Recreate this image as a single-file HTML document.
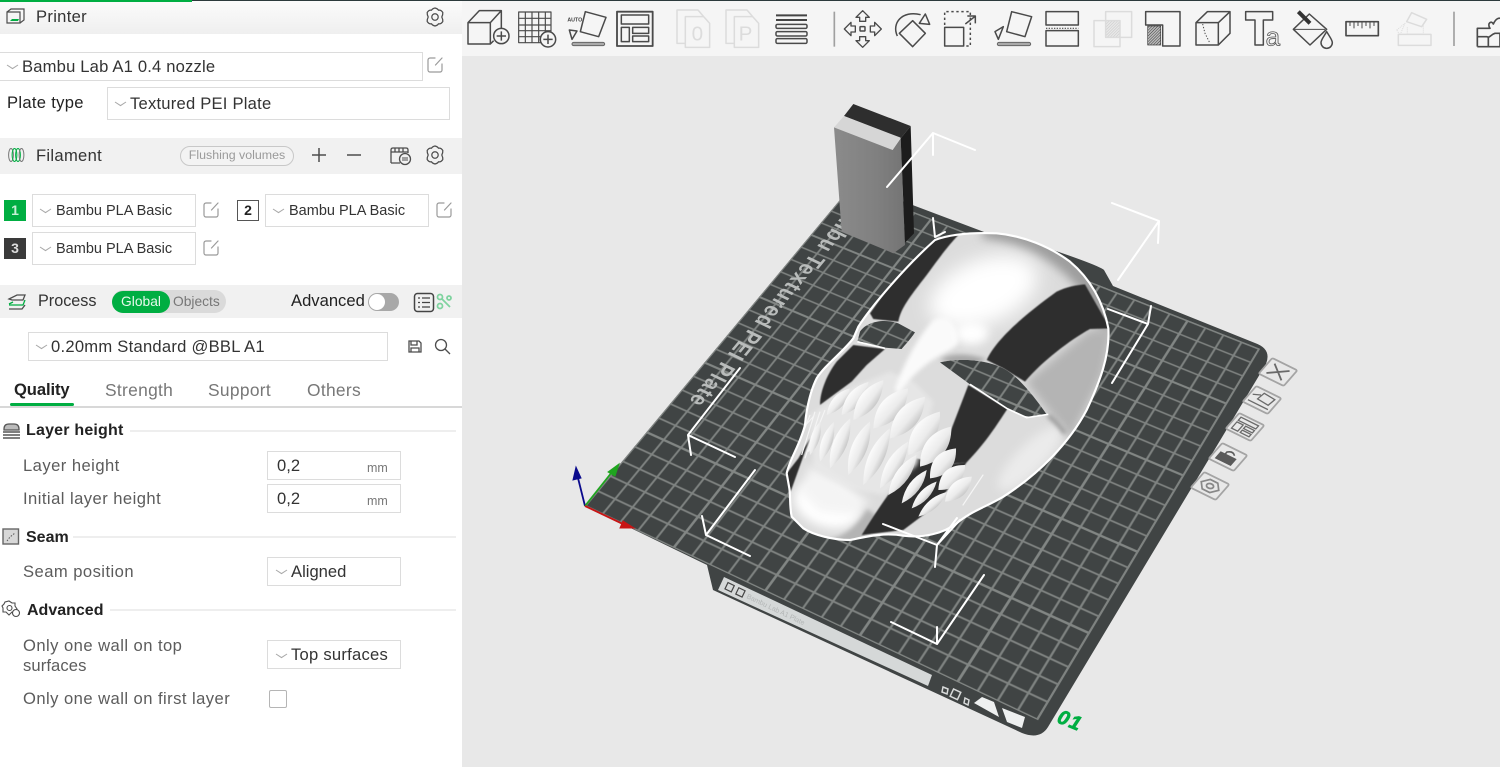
<!DOCTYPE html>
<html><head><meta charset="utf-8"><title>Bambu Studio</title>
<style>
html,body{margin:0;padding:0;width:1500px;height:767px;overflow:hidden;background:#e8e8e8;font-family:"Liberation Sans","Noto Sans CJK SC",sans-serif}
#root{position:relative;width:1500px;height:767px;overflow:hidden}
svg{position:absolute;left:0;top:0;overflow:visible}
.t{position:absolute;white-space:nowrap;line-height:20px;height:20px;font-size:16.6px;color:#333}
.box{position:absolute;box-sizing:border-box;border:1.5px solid #dcdcdc;background:#fff}
.hd{position:absolute;left:0;width:462px}
.g{color:#5c5c5c;letter-spacing:.45px}.b{font-weight:bold;color:#222;font-size:16px;letter-spacing:.2px}
.f{font-size:14.5px;color:#333}
.sw{position:absolute;box-sizing:border-box;width:22px;height:21px;text-align:center;font-size:14px;line-height:20px;font-weight:bold}
.ln{position:absolute;height:1.5px;background:#eeeeee}
.u{font-size:12.5px;color:#777}
.tab{color:#777;font-size:17.4px;letter-spacing:.3px}
</style></head><body><div id="root">

<!-- plate base -->
<svg width="1500" height="767">
<path d="M585 506L854 183L1000 238L1053 250Q1100 266 1104 270L1113 286L1255 343Q1272 349 1266 364L1048 727Q1040 740 1022 733L713 590L707 565Z" fill="#404444"/>
<path d="M724 577L932 675L928 686L718 590Z" fill="#d5d8d8"/>
<g transform="matrix(.9,.43,-.43,.9,724,584)"><rect x="3" y="-3" width="7" height="7" fill="none" stroke="#444" stroke-width="1.2"/><rect x="15" y="-3" width="7" height="7" fill="none" stroke="#444" stroke-width="1.2"/><text x="26" y="3" font-size="7" fill="#b3b6b6" font-family="Liberation Sans">Bambu Lab A1 Plate</text></g>
<polygon points="974,703 982,697 994,702 999,717" fill="#eef0f0"/>
<polygon points="1002,708 1025,717 1022,728 1007,722" fill="#eef0f0"/>
<g fill="none" stroke="#d8dada" stroke-width="1.5"><path d="M943 687l5 2-1 5-5-2z"/><rect x="-3" y="-3" width="8" height="8" transform="translate(955,693) rotate(25)"/><path d="M965 698l4 2-1 5-4-2z"/></g>
</svg>

<!-- grid -->
<div style="position:absolute;left:0;top:0;width:1000px;height:1000px;transform-origin:0 0;transform:matrix3d(.3795,.1616,0,-.00007793,.3972,-.2955,0,.00015013,0,0,1,0,585,506,0,1)">
<svg width="1000" height="1000" viewBox="0 0 1000 1000">
<defs>
<pattern id="gr" x="-20.5" y="-20.5" width="41" height="41" patternUnits="userSpaceOnUse"><path d="M0 20.5H41M20.5 0V41" stroke="#7f8381" stroke-width="4.2" fill="none"/></pattern>
<pattern id="gr5" x="-102.5" y="-102.5" width="205" height="205" patternUnits="userSpaceOnUse"><path d="M0 102.5H205M102.5 0V205" stroke="#828684" stroke-width="5" fill="none"/></pattern>
</defs>
<rect x="0" y="0" width="982" height="984" fill="url(#gr)"/>
<rect x="0" y="0" width="982" height="984" fill="url(#gr5)"/>
<path d="M0 984H982V0" fill="none" stroke="#7f8381" stroke-width="4.2"/>
</svg></div>

<!-- scene -->
<svg width="1500" height="767">
<defs>
<filter id="b30" x="-60%" y="-60%" width="220%" height="220%"><feGaussianBlur stdDeviation="28"/></filter>
<filter id="b14" x="-60%" y="-60%" width="220%" height="220%"><feGaussianBlur stdDeviation="14"/></filter>
<filter id="b6" x="-40%" y="-40%" width="180%" height="180%"><feGaussianBlur stdDeviation="6"/></filter>
<filter id="b1" x="-10%" y="-10%" width="120%" height="120%"><feGaussianBlur stdDeviation="1.6"/></filter>
<clipPath id="sk"><path clip-rule="evenodd" d="M495 45C540 28 600 22 680 25C760 32 840 65 900 110C960 160 1000 230 1015 310C1020 390 990 470 950 555C900 650 810 745 700 815C650 845 600 860 560 895C520 925 460 940 400 932C340 922 290 935 240 945C190 945 130 930 100 910L65 875C58 840 62 815 58 790L50 745C60 700 90 660 105 600C110 540 125 490 140 460C165 420 220 380 250 340L265 305C300 250 400 130 495 45ZM510 412C560 400 640 400 700 430C740 450 790 510 830 568C800 578 770 578 740 565L710 550L600 478ZM270 320C290 290 340 280 385 295L435 322C420 345 400 365 395 372L345 368L262 350Z"/></clipPath>
<linearGradient id="lf" x1="0" y1="0" x2="0" y2="1"><stop offset="0" stop-color="#fbfbfb"/><stop offset=".6" stop-color="#ebebeb"/><stop offset="1" stop-color="#c8c8c8"/></linearGradient>
<path id="leaf" d="M0 0Q50-22 100 0Q50 22 0 0Z" fill="url(#lf)"/>
<linearGradient id="blk" x1="0" y1="0" x2="1" y2="0"><stop offset="0" stop-color="#8b8b8b"/><stop offset=".6" stop-color="#808080"/><stop offset="1" stop-color="#747474"/></linearGradient>
</defs>

<text text-anchor="end" transform="matrix(-.58,.7,-.95,-.46,688,402)" font-family="Liberation Sans" font-weight="bold" font-size="22" letter-spacing="1.2" fill="#b9bcbb">Bambu Textured PEI Plate</text>

<!-- block -->
<g transform="translate(560,90) scale(.33333)">
<polygon points="880,42 1052,108 1022,145 852,78" fill="#2e2e2e"/>
<polygon points="852,78 1022,143 998,180 822,112" fill="#d6d6d6"/>
<polygon points="822,112 998,180 1022,145 1035,465 1000,490 845,425" fill="url(#blk)"/>
<polygon points="1022,145 1052,108 1062,430 1035,458" fill="#1c1c1c"/>
</g>

<!-- skull -->
<g transform="translate(770,225) scale(.33333)">
<g clip-path="url(#sk)">
<rect x="0" y="0" width="1060" height="1000" fill="#dcdcdc"/>
<path d="M640 10C760 25 850 70 920 140C975 200 1010 260 1025 320" fill="none" stroke="#9d9d9d" stroke-width="60" filter="url(#b14)"/>
<ellipse cx="640" cy="200" rx="170" ry="95" transform="rotate(-22 640 200)" fill="#ffffff" filter="url(#b30)"/>
<path d="M765 470L960 312L1030 310L1000 450L900 650L860 590Z" fill="#b4b4b4" filter="url(#b14)"/>
<ellipse cx="780" cy="700" rx="130" ry="40" transform="rotate(-45 780 700)" fill="#ebebeb" filter="url(#b14)"/>
<ellipse cx="170" cy="840" rx="100" ry="65" transform="rotate(20 170 840)" fill="#ffffff" filter="url(#b14)"/>
<path d="M170 945Q250 930 290 850L330 880L270 960Z" fill="#b4b4b4" filter="url(#b6)"/>
<path d="M835 572Q860 590 885 625" fill="none" stroke="#9a9a9a" stroke-width="12" filter="url(#b6)"/>
<!-- bands -->
<g fill="#2f2f2f" filter="url(#b1)">
<path d="M575 20L490 45L370 165L300 265L310 282L385 290C392 250 420 215 470 150C500 110 530 65 575 20Z"/>
<path d="M945 178L1020 310L960 312C900 345 815 410 765 470L700 430L650 405C680 340 770 265 860 200C890 185 920 180 945 178Z"/>
<path d="M250 360L345 372L290 420L245 470L150 540C150 500 170 450 200 410Z"/>
<path d="M595 480L712 552C680 600 650 650 590 712L500 720L545 610Z"/>
<path d="M400 915L275 930C300 890 350 810 400 750L440 700L520 720L590 712L500 840Z"/>
<path d="M62 800L105 680L120 640L85 700L50 745Z"/>
</g>
<!-- tooth zone -->
<path d="M120 570L240 490L360 440L430 470L490 530L440 720L340 810L230 790L130 720Z" fill="#e6e6e6" filter="url(#b6)"/>
<path d="M120 720L230 790L300 830L250 870L150 860L90 800Z" fill="#f4f4f4" filter="url(#b14)"/>
<!-- nose -->
<path d="M375 490C400 420 440 340 490 285C530 265 555 285 565 340C570 370 530 375 480 410C440 440 410 470 385 510Z" fill="#fafafa" filter="url(#b6)"/>
<ellipse cx="605" cy="325" rx="50" ry="34" fill="#ffffff" filter="url(#b14)"/>
<path d="M510 405C540 382 590 385 650 402L600 425Z" fill="#a8a8a8" filter="url(#b6)"/>
<!-- spikes -->
<g stroke="#f4f4f4" stroke-width="3.5" fill="none"><path d="M95 690L135 560M85 660L120 570M105 700L150 560M80 630L130 575M115 680L165 555"/></g>
<!-- teeth lower -->
<use href="#leaf" transform="translate(120,690) rotate(-73) scale(1.05,1.2)"/>
<use href="#leaf" transform="translate(150,710) rotate(-71) scale(1.26,1.5)"/>
<use href="#leaf" transform="translate(180,730) rotate(-68) scale(1.62,1.9)"/>
<use href="#leaf" transform="translate(235,750) rotate(-68) scale(1.73,2.1)"/>
<use href="#leaf" transform="translate(280,780) rotate(-65) scale(1.88,2.1)"/>
<use href="#leaf" transform="translate(330,790) rotate(-59) scale(1.64,2)"/>
<use href="#leaf" transform="translate(355,810) rotate(-55) scale(1.47,1.8)"/>
<use href="#leaf" transform="translate(395,835) rotate(-53) scale(1.25,1.5)"/>
<use href="#leaf" transform="translate(425,850) rotate(-47) scale(1.1,1.3)"/>
<use href="#leaf" transform="translate(445,875) rotate(-41) scale(1.13,1.3)"/>
<!-- teeth upper -->
<use href="#leaf" transform="translate(170,570) rotate(-49) scale(1.06,1.6)"/>
<use href="#leaf" transform="translate(215,570) rotate(-51) scale(1.28,2)"/>
<use href="#leaf" transform="translate(250,585) rotate(-53) scale(1.5,2.4)"/>
<use href="#leaf" transform="translate(310,610) rotate(-49) scale(1.59,2.9)"/>
<use href="#leaf" transform="translate(360,640) rotate(-50) scale(1.63,2.9)"/>
<use href="#leaf" transform="translate(415,690) rotate(-54) scale(1.61,3)"/>
<use href="#leaf" transform="translate(450,725) rotate(-52) scale(1.53,2.8)"/>
<use href="#leaf" transform="translate(480,760) rotate(-49) scale(1.19,2.5)"/>
<use href="#leaf" transform="translate(505,795) rotate(-43) scale(1.1,2.4)"/>
<use href="#leaf" transform="translate(525,830) rotate(-43) scale(1.1,2.1)"/>
</g>
<path fill="none" stroke="#fff" stroke-width="6.5" stroke-linejoin="round" d="M495 45C540 28 600 22 680 25C760 32 840 65 900 110C960 160 1000 230 1015 310C1020 390 990 470 950 555C900 650 810 745 700 815C650 845 600 860 560 895C520 925 460 940 400 932C340 922 290 935 240 945C190 945 130 930 100 910L65 875C58 840 62 815 58 790L50 745C60 700 90 660 105 600C110 540 125 490 140 460C165 420 220 380 250 340L265 305C300 250 400 130 495 45Z"/>
<path fill="none" stroke="#fff" stroke-width="5" d="M600 478L710 550L770 578L835 568M262 350L345 370"/>
</g>

<!-- selection box -->
<g fill="none" stroke="#fff" stroke-width="2" stroke-linecap="round" stroke-linejoin="round">
<path d="M887 187L933 133L975 150M933 133L933 155"/>
<path d="M1112 203L1159 221L1118 280M1159 221L1158 243"/>
<path d="M1108 309L1148 324L1112 383M1151 306L1148 324"/>
<path d="M933 218L935 237L945 232"/>
<path d="M983 475L963 505" stroke-width="1.2" opacity=".7"/>
<path d="M957 518L937 545L883 524M937 545L935 567M937 545L960 520"/>
<path d="M740 368L688 435L735 457M688 435L691 455"/>
<path d="M755 470L706 535L750 556M706 535L702 516"/>
<path d="M984 575L937 644L891 622M937 644L937 627"/>
</g>

<!-- axes -->
<g fill="none" stroke-width="1.8">
<path d="M585 506L578 478" stroke="#0a0a8c"/><path d="M573 480L576 467L581 478Z" fill="#0a0a8c" stroke="#0a0a8c" stroke-width="1"/>
<path d="M585 506L612 472" stroke="#1fa51f"/><path d="M608 472L619 464L615 476Z" fill="#1fa51f" stroke="#1fa51f" stroke-width="1"/>
<path d="M585 506L625 525" stroke="#c81414"/><path d="M623 521L634 528L620 528Z" fill="#c81414" stroke="#c81414" stroke-width="1"/>
</g>

<text transform="translate(1056,722) rotate(22)" font-family="Liberation Sans" font-weight="bold" font-style="italic" font-size="20" letter-spacing="1.5" fill="#00ae42" stroke="#00ae42" stroke-width=".7">01</text>

<!-- plate buttons -->
<g fill="#e8e8e8" stroke="#a4a4a4" stroke-width="1.8">
<defs><path id="pb" vector-effect="non-scaling-stroke" d="M-8.5 -10H8.5Q10 -10 10 -8.5V8.5Q10 10 8.5 10H-8.5Q-10 10-10 8.5V-8.5Q-10-10-8.5-10Z"/></defs>
<g transform="matrix(1.25,.62,-.68,.78,1278,372)"><use href="#pb"/><path vector-effect="non-scaling-stroke" stroke="#6a6a6a" stroke-width="1.8" fill="none" d="M-6 -6L6 6M6 -6L-6 6"/></g>
<g transform="matrix(1.25,.62,-.68,.78,1262,400)"><use href="#pb"/><path vector-effect="non-scaling-stroke" stroke="#6a6a6a" stroke-width="1.3" fill="none" d="M-2 -7L7 -6L6 2L-3 1ZM-8 6H8M-8 -1L-3 -4"/></g>
<g transform="matrix(1.25,.62,-.68,.78,1245,427)"><use href="#pb"/><path vector-effect="non-scaling-stroke" stroke="#6a6a6a" stroke-width="1.3" fill="none" d="M-7 -7H7V-3H-7ZM-7 -1H-2V7H-7ZM0 -1H7V2H0ZM0 4H7V7H0Z"/></g>
<g transform="matrix(1.25,.62,-.68,.78,1228,457)"><use href="#pb"/><rect x="-6" y="-1" width="11" height="7" fill="#5a5a5a" stroke="#5a5a5a"/><path vector-effect="non-scaling-stroke" stroke="#5a5a5a" stroke-width="1.6" fill="none" d="M-3 -1V-4Q0 -8 3 -4"/></g>
<g transform="matrix(1.25,.62,-.68,.78,1210,486)"><use href="#pb"/><path vector-effect="non-scaling-stroke" stroke="#888" stroke-width="1.7" fill="none" d="M-7 0L-3 -6H3L7 0L3 6H-3Z"/><circle r="2.5" vector-effect="non-scaling-stroke" stroke="#888" fill="none"/></g>
</g>
</svg>

<!-- toolbar -->
<div style="position:absolute;left:462px;top:0;width:1038px;height:56px;background:#f5f5f5;border-top:1px solid #2c3a3c;box-sizing:border-box"></div>
<svg width="1500" height="56">
<defs>
<pattern id="hd" width="6" height="6" patternUnits="userSpaceOnUse" patternTransform="rotate(-45)"><rect width="6" height="6" fill="#bbb"/><path d="M0 0H6" stroke="#3a3a3a" stroke-width="3"/></pattern>
<pattern id="hl" width="6" height="6" patternUnits="userSpaceOnUse" patternTransform="rotate(-45)"><rect width="6" height="6" fill="#e8e8e8"/><path d="M0 0H6" stroke="#c8c8c8" stroke-width="3"/></pattern>
</defs>
<g transform="translate(462,0) scale(.33333)" fill="none" stroke="#4a4a4a" stroke-width="4.5" stroke-linejoin="round">
<path d="M18 68H85V132H18ZM18 68L52 32H118L85 68M118 32V90M85 132L95 122"/>
<circle cx="118" cy="108" r="23" fill="#f5f5f5"/><path d="M104 108H132M118 94V122"/>
<path d="M170 36H267V128H170ZM190 36V128M210 36V128M230 36V128M250 36V128M170 55H267M170 75H267M170 92H267M170 110H267" stroke-width="3.5"/>
<circle cx="258" cy="118" r="23" fill="#f5f5f5"/><path d="M244 118H272M258 104V132"/>
<text x="316" y="65" font-family="Liberation Sans" font-weight="bold" font-size="16" fill="#444" stroke="none">AUTO</text>
<path d="M370 35L432 52L410 110L355 95Z"/><path d="M322 90L345 93L330 118Z"/><rect x="330" y="127" width="98" height="10" rx="5" fill="#aaa" stroke="#666" stroke-width="3"/>
<rect x="465" y="35" width="107" height="103" stroke-width="5.5"/><rect x="478" y="45" width="82" height="27"/><rect x="478" y="82" width="24" height="43"/><rect x="512" y="82" width="48" height="18"/><rect x="512" y="108" width="48" height="17"/>
<g stroke="#dcdcdc"><path d="M670 142V50H725L743 70V142ZM670 130H645V30H708L725 50"/><text x="689" y="122" font-family="Liberation Sans" font-size="62" fill="#dcdcdc" stroke="none">0</text>
<path d="M817 142V50H872L890 70V142ZM817 130H792V30H855L872 50"/><text x="830" y="122" font-family="Liberation Sans" font-size="62" fill="#dcdcdc" stroke="none">P</text></g>
<path d="M942 46H1035M942 60H1035" stroke-width="6" stroke="#444"/>
<rect x="942" y="73" width="93" height="12" rx="4"/><rect x="942" y="95" width="93" height="13" rx="4"/><rect x="942" y="116" width="93" height="14" rx="4"/>
<path d="M1117 35V140" stroke="#a0a0a0" stroke-width="5"/>
<rect x="1194" y="80" width="15" height="13" rx="2"/>
<path d="M1202 32L1222 52L1211 52V64H1193V52H1182ZM1202 142L1222 122H1211V110H1193V122H1182ZM1147 87L1167 67V78H1180V96H1167V107ZM1258 87L1238 67V78H1225V96H1238V107Z" stroke-width="4"/>
<path d="M1352 62L1390 100L1352 140L1312 100Z"/><path d="M1306 108C1288 70 1320 30 1376 44"/><path d="M1372 70L1403 73L1390 42Z"/>
<rect x="1448" y="82" width="57" height="56"/><path d="M1448 75V35H1525V138H1512" stroke-dasharray="7 8"/><path d="M1510 72L1538 50M1516 48H1540V70"/>
</g>
<g transform="translate(980,0) scale(.33333)" fill="none" stroke="#4a4a4a" stroke-width="4.5" stroke-linejoin="round">
<path d="M95 35L155 50L135 110L80 95Z"/><path d="M45 95L70 80L55 118Z"/><rect x="52" y="127" width="100" height="10" rx="5" fill="#aaa" stroke="#666" stroke-width="3"/>
<rect x="198" y="35" width="97" height="40"/><rect x="198" y="92" width="97" height="46"/><path d="M198 85H295" stroke-dasharray="4 4" stroke-width="3.5"/>
<g stroke="#dcdcdc"><rect x="377" y="62" width="43" height="50" fill="url(#hl)" stroke="none"/><rect x="342" y="62" width="78" height="78"/><rect x="377" y="35" width="78" height="77"/></g>
<path d="M497 35H600V138H548V75H497Z"/><rect x="503" y="78" width="39" height="57" fill="url(#hd)" stroke="#444" stroke-width="2"/>
<path d="M648 68H715V135H648ZM648 68L682 35H750L715 68M750 35V100L715 135"/><path d="M668 72L675 100L690 130" stroke-dasharray="4 5" stroke-width="3"/>
<path d="M797 35H878V60H850V135H825V60H797Z"/>
<text x="857" y="136" font-family="Liberation Sans" font-size="78" fill="none" stroke="#555" stroke-width="2.5">a</text>
<path d="M940 88L988 42L1040 88L990 135Z"/><path d="M955 35L990 70" stroke-width="12" stroke="#333"/><path d="M942 88H1035" stroke-width="3"/>
<path d="M1040 95C1030 112 1023 120 1023 128A17 17 0 0 0 1057 128C1057 120 1050 112 1040 95Z" fill="#f5f5f5"/>
<rect x="1098" y="65" width="97" height="42" stroke-width="5"/><path d="M1110 65V78M1122 65V85M1134 65V78M1146 65V85M1158 65V78M1170 65V85M1182 65V78" stroke-width="3"/>
<g stroke="#dcdcdc"><path d="M1295 38L1340 58L1325 80L1280 65Z"/><path d="M1250 90L1275 70L1260 105ZM1282 82V102H1330V72" stroke-dasharray="3 3" stroke-width="3"/><rect x="1255" y="103" width="98" height="33"/></g>
<path d="M1422 35V138" stroke="#a0a0a0" stroke-width="5"/>
<path d="M1492 85H1530C1520 70 1535 60 1540 72C1550 50 1560 55 1565 55V100H1545C1530 105 1530 115 1520 110H1492ZM1492 140H1560V100M1492 85V140M1525 110V140" stroke-width="5"/>
</g>
</svg>

<!-- left panel -->
<div style="position:absolute;left:0;top:0;width:462px;height:767px;background:#fff"></div>
<div style="position:absolute;left:0;top:0;width:192px;height:2px;background:#00ae42;z-index:2"></div>
<div style="position:absolute;left:192px;top:0;width:270px;height:1px;background:#2c3a3c;z-index:2"></div>
<div class="hd" style="top:1px;height:33px;background:linear-gradient(#fbfbfb,#efefef)"></div>
<div class="hd" style="top:138px;height:36px;background:#f1f1f1"></div>
<div class="hd" style="top:285px;height:33px;background:#f1f1f1"></div>

<div class="t" style="left:36px;top:7px;letter-spacing:.3px">Printer</div>
<div class="box" style="left:-2px;top:52px;width:425px;height:29px"></div>
<div class="t" style="left:22px;top:57px;letter-spacing:.18px">Bambu Lab A1 0.4 nozzle</div>
<div class="t" style="left:7px;top:93px;color:#222;letter-spacing:.3px">Plate type</div>
<div class="box" style="left:107px;top:87px;width:343px;height:33px"></div>
<div class="t" style="left:130px;top:94px;letter-spacing:.22px">Textured PEI Plate</div>

<div class="t" style="left:36px;top:146px;letter-spacing:.3px">Filament</div>
<div style="position:absolute;left:180px;top:146px;width:114px;height:20px;box-sizing:border-box;border:1.2px solid #c8c8c8;border-radius:10px;background:#f3f3f3;color:#9a9a9a;font-size:12.4px;line-height:17px;text-align:center">Flushing volumes</div>

<div class="sw" style="left:4px;top:200px;background:#00ae42;color:#c8f0d6">1</div>
<div class="box" style="left:32px;top:194px;width:164px;height:33px"></div>
<div class="t f" style="left:56px;top:201px">Bambu PLA Basic</div>
<div class="sw" style="left:237px;top:200px;background:#fff;border:1.3px solid #555;color:#222;line-height:18px">2</div>
<div class="box" style="left:265px;top:194px;width:164px;height:33px"></div>
<div class="t f" style="left:289px;top:201px">Bambu PLA Basic</div>
<div class="sw" style="left:4px;top:238px;background:#3a3a3a;color:#ddd">3</div>
<div class="box" style="left:32px;top:232px;width:164px;height:33px"></div>
<div class="t f" style="left:56px;top:239px">Bambu PLA Basic</div>

<div class="t" style="left:38px;top:291px;font-size:16.2px">Process</div>
<div style="position:absolute;left:112px;top:290px;width:114px;height:23px;border-radius:12px;background:#dadada"></div>
<div style="position:absolute;left:112px;top:291px;width:58px;height:22px;border-radius:11px;background:#00ae42;color:#e6f8ec;font-size:13.8px;line-height:22px;text-align:center">Global</div>
<div class="t" style="left:173px;top:292px;font-size:13.8px;color:#777">Objects</div>
<div class="t" style="left:291px;top:291px;color:#222">Advanced</div>
<div style="position:absolute;left:368px;top:293px;width:31px;height:18px;border-radius:9px;background:#a8a8a8"></div>
<div style="position:absolute;left:369px;top:294px;width:16px;height:16px;border-radius:8px;background:#fff"></div>

<div class="box" style="left:28px;top:332px;width:360px;height:29px"></div>
<div class="t" style="left:51px;top:337px;letter-spacing:.25px">0.20mm Standard @BBL A1</div>

<div class="t" style="left:14px;top:380px;font-weight:bold;color:#222;letter-spacing:-.1px">Quality</div>
<div class="t tab" style="left:105px;top:380px">Strength</div>
<div class="t tab" style="left:208px;top:380px">Support</div>
<div class="t tab" style="left:307px;top:380px">Others</div>
<div style="position:absolute;left:0;top:406px;width:462px;height:1.5px;background:#d8d8d8"></div>
<div style="position:absolute;left:10px;top:403px;width:64px;height:3px;border-radius:2px;background:#00ae42"></div>

<div class="t b" style="left:26px;top:421px">Layer height</div>
<div class="ln" style="left:130px;top:430px;width:326px"></div>
<div class="t g" style="left:23px;top:456px">Layer height</div>
<div class="box" style="left:267px;top:451px;width:134px;height:29px"></div>
<div class="t" style="left:277px;top:456px">0,2</div>
<div class="t u" style="left:367px;top:458px">mm</div>
<div class="t g" style="left:23px;top:489px">Initial layer height</div>
<div class="box" style="left:267px;top:484px;width:134px;height:29px"></div>
<div class="t" style="left:277px;top:489px">0,2</div>
<div class="t u" style="left:367px;top:491px">mm</div>

<div class="t b" style="left:26px;top:528px;letter-spacing:0">Seam</div>
<div class="ln" style="left:73px;top:536px;width:383px"></div>
<div class="t g" style="left:23px;top:562px">Seam position</div>
<div class="box" style="left:267px;top:557px;width:134px;height:29px"></div>
<div class="t" style="left:291px;top:562px">Aligned</div>

<div class="t b" style="left:27px;top:601px;letter-spacing:0">Advanced</div>
<div class="ln" style="left:110px;top:609px;width:346px"></div>
<div class="t g" style="left:23px;top:636px">Only one wall on top</div>
<div class="t g" style="left:23px;top:656px;letter-spacing:.1px">surfaces</div>
<div class="box" style="left:267px;top:640px;width:134px;height:29px"></div>
<div class="t" style="left:291px;top:645px;letter-spacing:.25px">Top surfaces</div>
<div class="t g" style="left:23px;top:689px">Only one wall on first layer</div>
<div style="position:absolute;left:269px;top:690px;width:18px;height:18px;box-sizing:border-box;border:1.3px solid #b5b5b5;border-radius:2px"></div>

<!-- panel icons -->
<svg width="462" height="767" style="z-index:3">
<defs>
<g id="gear" fill="none" stroke="#4d4d4d" stroke-width="1.25" stroke-linejoin="round"><path d="M0-9Q2.500-8.500 3.500-6.800Q6-7.300 7.800-4.500Q8-2.500 6.800 0Q8 2.500 7.800 4.500Q6 7.300 3.500 6.800Q2.500 8.500 0 9Q-2.500 8.500-3.500 6.800Q-6 7.300-7.800 4.500Q-8 2.500-6.800 0Q-8-2.500-7.800-4.500Q-6-7.300-3.500-6.800Q-2.500-8.500 0-9Z"/><circle r="3.200"/></g>
<path id="edit" fill="none" stroke="#9a9a9a" stroke-width="1.2" stroke-linecap="round" d="M8 1H3A2 2 0 0 0 1 3V13A2 2 0 0 0 3 15H13A2 2 0 0 0 15 13V7M8.500 8L15 1"/>
<path id="ch" fill="none" stroke="#a8a8a8" stroke-width="1" d="M0 0L5.500 3.600L11 0"/>
</defs>
<use href="#gear" x="435" y="17"/><use href="#gear" x="435" y="155"/>
<use href="#edit" x="427" y="57"/><use href="#edit" x="203" y="202"/><use href="#edit" x="436" y="202"/><use href="#edit" x="203" y="240"/>
<use href="#ch" x="7" y="65"/><use href="#ch" x="115" y="102"/><use href="#ch" x="40" y="209"/><use href="#ch" x="273" y="209"/><use href="#ch" x="40" y="247"/><use href="#ch" x="36" y="345"/><use href="#ch" x="276" y="570"/><use href="#ch" x="276" y="654"/>
<!-- printer icon -->
<g fill="none" stroke="#4d4d4d" stroke-width="1.2"><path d="M7 12H20V23H7ZM7 12L11 9H24V20L20 23"/></g><path d="M10 21H18L19 19H12Z" fill="#00ae42"/>
<!-- filament icon -->
<g fill="none" stroke-width="1"><ellipse cx="11" cy="155" rx="2.400" ry="6.500" stroke="#777"/><ellipse cx="14.500" cy="155" rx="2.400" ry="6.500" stroke="#00ae42"/><ellipse cx="18" cy="155" rx="2.400" ry="6.500" stroke="#00ae42"/><ellipse cx="21.500" cy="155" rx="2.400" ry="6.500" stroke="#777"/></g>
<path d="M319 148V162M312 155H326M347 155H361" stroke="#4d4d4d" stroke-width="1.500" fill="none"/>
<g fill="none" stroke="#4d4d4d" stroke-width="1.300"><path d="M391 163V150Q391 148 393 148H406Q408 148 408 150V153M391 163H400M391 152H408M395 148V152M399 148V152M403 148V152"/><circle cx="405" cy="159" r="5.500" fill="#f1f1f1"/><path d="M402 158H408M408 160H402" stroke-width="1"/></g>
<!-- process icon -->
<g fill="none" stroke-width="1.300"><path d="M9 299L17 295H25L23 300H12Z" stroke="#4d4d4d"/><path d="M9 304L13 302M25 300L23 305H9" stroke="#00ae42"/><path d="M9 309H22L25 305" stroke="#4d4d4d"/></g>
<rect x="414.500" y="293.500" width="19" height="18" rx="3" fill="none" stroke="#444" stroke-width="1.500"/>
<path d="M418 298h2M422 298h8M418 302.500h2M422 302.500h8M418 307h2M422 307h8" stroke="#444" stroke-width="1.200" fill="none"/>
<g fill="none" stroke="#7fd39f" stroke-width="1.800"><circle cx="440" cy="297" r="2.500"/><circle cx="449" cy="298" r="2"/><circle cx="440" cy="306" r="2.500"/><path d="M442 299L450 307"/></g>
<!-- save / search -->
<g fill="none" stroke="#4d4d4d" stroke-width="1.300"><path d="M409 341H419L421 343V352H409ZM411 341V345H417V341M411 352V348H419V352"/><circle cx="441" cy="345" r="5.500"/><path d="M445 349L450 354"/></g>
<!-- layer height icon -->
<g fill="none" stroke="#555" stroke-width="1.300"><path d="M4 429Q4 424 9 424H14Q19 424 19 429V430H4Z" fill="#bbb"/><path d="M3 432H20M3 435H20M3 438H20" stroke-width="1.400"/></g>
<!-- seam icon -->
<rect x="3" y="529" width="15.500" height="15" fill="#d8d8d8" stroke="#666" stroke-width="1.400"/>
<path d="M7 541L10 537L15 533" fill="none" stroke="#555" stroke-width="1" stroke-dasharray="1.500 1.500"/>
<!-- cogs -->
<g fill="none" stroke="#4d4d4d" stroke-width="1.100"><path d="M9 601L12 603L15 603L15 606L17 609L15 612L12 612L9 615L6 612L3 612L3 608L2 606L4 604L5 602Z"/><circle cx="9.500" cy="608" r="2.500"/><circle cx="16" cy="613" r="3.500" fill="#fff"/></g>
</svg>
</div></body></html>
